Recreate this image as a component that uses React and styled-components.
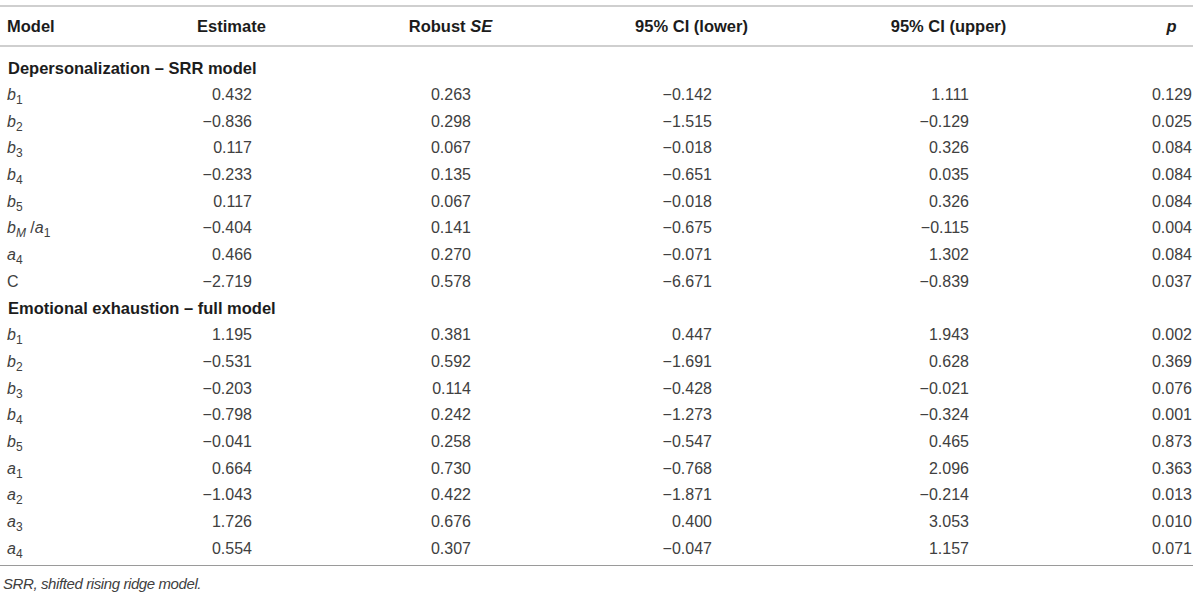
import React from 'react';
import styled, { createGlobalStyle } from 'styled-components';

const GlobalStyle = createGlobalStyle`
  html, body {
    margin: 0;
    padding: 0;
    background: #fff;
  }
  body {
    font-family: "Liberation Sans", Arial, sans-serif;
  }
`;

const COLS = '130px 122px 219px 241px 257px 223px 1fr';

const TableWrap = styled.div`
  width: 1193px;
  padding-top: 5px;
`;

const HeadRow = styled.div`
  display: grid;
  grid-template-columns: ${COLS};
  height: 37px;
  align-items: center;
  border-top: 2px solid #cfcfcf;
  border-bottom: 2px solid #cfcfcf;
  font-size: 16.5px;
  font-weight: bold;
  color: #1c1c1c;
  padding-top: 1px;
  box-sizing: content-box;
`;

const Body = styled.div`
  padding: 8px 0 3px;
  border-bottom: 1px solid #9a9a9a;
`;

const Row = styled.div`
  display: grid;
  grid-template-columns: ${COLS};
  height: 26.7px;
  align-items: center;
  font-size: 16px;
  color: #404040;
`;

const SectionTitle = styled.div`
  grid-column: 1 / -1;
  padding-left: 8px;
  font-size: 16.5px;
  font-weight: bold;
  color: #1c1c1c;
  white-space: nowrap;
`;

const LabelCell = styled.div`
  padding-left: 7px;
  white-space: nowrap;
`;

const HeadSlot = styled.div`
  justify-self: end;
  width: 41px;
  display: flex;
  justify-content: center;
  white-space: nowrap;
`;

const ValueSlot = styled.div`
  justify-self: end;
  width: 41px;
  display: flex;
  justify-content: flex-end;
  white-space: nowrap;
`;

const Sub = styled.sub`
  font-size: 12px;
  vertical-align: -4px;
  line-height: 0;
`;

const Note = styled.div`
  padding: 9px 0 0 3px;
  font-size: 15px;
  letter-spacing: -0.4px;
  font-style: italic;
  color: #404040;
`;

const Sym = ({ v, s, italicSub }) => (
  <>
    <i>{v}</i>
    <Sub>{italicSub ? <i>{s}</i> : s}</Sub>
  </>
);

const sections = [
  {
    title: 'Depersonalization \u2013 SRR model',
    rows: [
      [<Sym v="b" s="1" />, '0.432', '0.263', '\u22120.142', '1.111', '0.129'],
      [<Sym v="b" s="2" />, '\u22120.836', '0.298', '\u22121.515', '\u22120.129', '0.025'],
      [<Sym v="b" s="3" />, '0.117', '0.067', '\u22120.018', '0.326', '0.084'],
      [<Sym v="b" s="4" />, '\u22120.233', '0.135', '\u22120.651', '0.035', '0.084'],
      [<Sym v="b" s="5" />, '0.117', '0.067', '\u22120.018', '0.326', '0.084'],
      [
        <>
          <Sym v="b" s="M" italicSub /> /<Sym v="a" s="1" />
        </>,
        '\u22120.404', '0.141', '\u22120.675', '\u22120.115', '0.004',
      ],
      [<Sym v="a" s="4" />, '0.466', '0.270', '\u22120.071', '1.302', '0.084'],
      ['C', '\u22122.719', '0.578', '\u22126.671', '\u22120.839', '0.037'],
    ],
  },
  {
    title: 'Emotional exhaustion \u2013 full model',
    rows: [
      [<Sym v="b" s="1" />, '1.195', '0.381', '0.447', '1.943', '0.002'],
      [<Sym v="b" s="2" />, '\u22120.531', '0.592', '\u22121.691', '0.628', '0.369'],
      [<Sym v="b" s="3" />, '\u22120.203', '0.114', '\u22120.428', '\u22120.021', '0.076'],
      [<Sym v="b" s="4" />, '\u22120.798', '0.242', '\u22121.273', '\u22120.324', '0.001'],
      [<Sym v="b" s="5" />, '\u22120.041', '0.258', '\u22120.547', '0.465', '0.873'],
      [<Sym v="a" s="1" />, '0.664', '0.730', '\u22120.768', '2.096', '0.363'],
      [<Sym v="a" s="2" />, '\u22121.043', '0.422', '\u22121.871', '\u22120.214', '0.013'],
      [<Sym v="a" s="3" />, '1.726', '0.676', '0.400', '3.053', '0.010'],
      [<Sym v="a" s="4" />, '0.554', '0.307', '\u22120.047', '1.157', '0.071'],
    ],
  },
];

const App = () => {
  return (
    <>
      <GlobalStyle />
      <TableWrap>
        <HeadRow>
          <LabelCell>Model</LabelCell>
          <HeadSlot>Estimate</HeadSlot>
          <HeadSlot>
            Robust&nbsp;<i>SE</i>
          </HeadSlot>
          <HeadSlot>95% CI (lower)</HeadSlot>
          <HeadSlot>95% CI (upper)</HeadSlot>
          <HeadSlot>
            <i>p</i>
          </HeadSlot>
        </HeadRow>
        <Body>
          {sections.map((section) => (
            <React.Fragment key={section.title}>
              <Row>
                <SectionTitle>{section.title}</SectionTitle>
              </Row>
              {section.rows.map(([label, ...values], i) => (
                <Row key={i}>
                  <LabelCell>{label}</LabelCell>
                  {values.map((v, j) => (
                    <ValueSlot key={j}>{v}</ValueSlot>
                  ))}
                </Row>
              ))}
            </React.Fragment>
          ))}
        </Body>
        <Note>SRR, shifted rising ridge model.</Note>
      </TableWrap>
    </>
  );
};

export default App;
